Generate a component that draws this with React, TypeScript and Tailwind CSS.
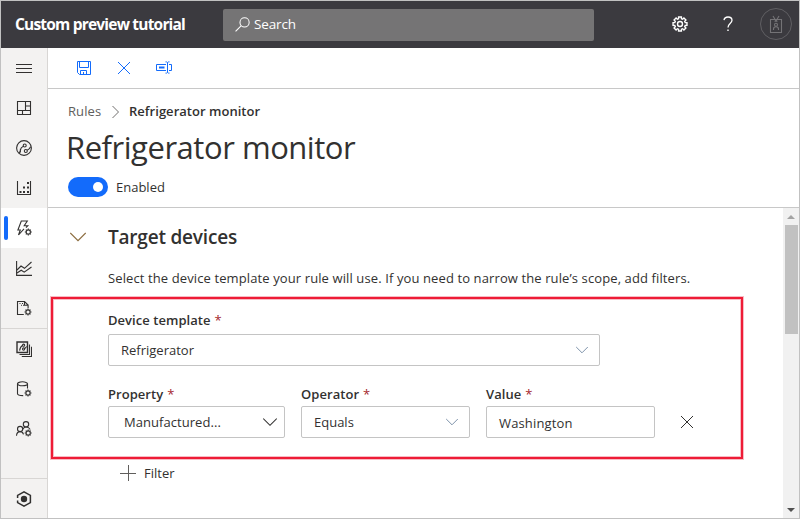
import React from "react";

type IconProps = { children: React.ReactNode; className?: string; size?: number; box?: number; sw?: number };

function Icon({ children, className = "", size = 16, box = 16, sw = 1.1 }: IconProps) {
  return (
    <svg
      width={size}
      height={size}
      viewBox={`0 0 ${box} ${box}`}
      fill="none"
      stroke="currentColor"
      strokeWidth={sw}
      className={`block shrink-0 ${className}`}
    >
      {children}
    </svg>
  );
}

function gearPath(cx: number, cy: number, outer: number, inner: number) {
  const pts: string[] = [];
  for (let i = 0; i < 8; i++) {
    const a = (i * Math.PI) / 4;
    const spots: [number, number][] = [
      [-0.27, inner],
      [-0.2, outer],
      [0.2, outer],
      [0.27, inner],
    ];
    for (const [d, r] of spots) {
      pts.push(`${(cx + r * Math.cos(a + d)).toFixed(2)} ${(cy + r * Math.sin(a + d)).toFixed(2)}`);
    }
  }
  return `M${pts.join("L")}Z`;
}

function SmallGear({ cx, cy }: { cx: number; cy: number }) {
  return (
    <>
      <circle cx={cx} cy={cy} r={2.1} />
      {[0, 45, 90, 135, 180, 225, 270, 315].map((a) => (
        <path key={a} d={`M${cx + 2.3} ${cy}h1.2`} transform={`rotate(${a} ${cx} ${cy})`} />
      ))}
    </>
  );
}

const navTop = [
  <Icon key="menu"><path d="M0 4.5h16M0 8.5h16M0 12.5h16" /></Icon>,
  <Icon key="dash"><path d="M1.5 1.5h13v13h-13zM1.5 10.5h13M9.5 1.5v9M9.5 6h5M6.5 10.5v4" /></Icon>,
  <Icon key="devices">
    <circle cx="8" cy="8" r="7.4" />
    <circle cx="8.7" cy="5.5" r="1.5" />
    <circle cx="9.8" cy="11" r="1.5" />
    <path d="M7.4 6.3C5.6 7 4.6 8.3 4.4 10.2L3.4 13.2M4.4 8.8v3.7M11.2 10.2C12.8 9.7 13.8 8.7 14.6 6.8" />
  </Icon>,
  <Icon key="sets">
    <path d="M1.5 1v13.5h13V1" />
    <path d="M3.5 12h2M7 12h2M11 12h2M7 7.5h2M11 7.5h2M11 3h2" strokeWidth="2" />
  </Icon>,
];

const navMid = [
  <Icon key="analytics">
    <path d="M.6 1v14.4H16" />
    <path d="m1 10 4-4 3.5 2.3L15.5 2M1 13l4.2-2.8 3 2L15.5 7" />
  </Icon>,
  <Icon key="jobs">
    <path d="M7.8 14.5H1.5v-13h7l3.6 3.6v3M8.5 1.5v3.8h3.6" />
    <path d="M3.5 3.5h1M6 3.5h1M5 5.3h1M7 5.3h1" />
    <SmallGear cx={12} cy={12} />
  </Icon>,
];

const navAdmin = [
  <Icon key="templates">
    <path d="M1 1h10.5v10.5H1z" strokeWidth="1.4" />
    <path d="M13.5 3.5v10h-10M15.5 5.8v9.7H5.8" />
    <circle cx="7.6" cy="4.2" r="1.1" /><circle cx="7.6" cy="8" r="1.1" />
    <path d="M6.5 4.6C4.8 5.4 4 7 3.6 9.6M8.7 7.7l2-2.2" />
  </Icon>,
  <Icon key="export">
    <ellipse cx="6.5" cy="2.8" rx="5" ry="2" />
    <path d="M1.5 2.8v9.9c0 1 2 1.9 5.7 1.9M11.5 2.8v4.7" />
    <SmallGear cx={12} cy={12} />
  </Icon>,
  <Icon key="people">
    <circle cx="10" cy="3.3" r="2.7" /><circle cx="4.1" cy="8" r="2.6" />
    <path d="M6.8 8.2C7.7 6.6 8.7 6 10 6c2 0 3.4.9 4.2 2.4M.5 14.7c.2-2.5 1.6-4.1 3.6-4.1 1.8 0 2.9 1 3.4 2.8" />
    <SmallGear cx={12.2} cy={12} />
  </Icon>,
];

function NavItem({ children }: { children: React.ReactNode }) {
  return <div className="flex h-10 shrink-0 items-center justify-center">{children}</div>;
}

function Chevron({ size = 12, className = "" }: { size?: number; className?: string }) {
  return (
    <Icon size={size} box={12} sw={0.9} className={className}>
      <path d="m.2 3 5.8 5.8L11.8 3" />
    </Icon>
  );
}

function Cross() {
  return <Icon size={12} box={12} sw={1}><path d="m0 0 12 12M12 0 0 12" /></Icon>;
}

function Label({ text }: { text: string }) {
  return (
    <div className="flex h-5 items-center gap-1 text-[13px] font-semibold leading-5 text-[#323130]">
      <span className="tracking-[0.05px]">{text}</span>
      <span className="font-normal text-[#a4262c]">*</span>
    </div>
  );
}

function Field({ children, className = "" }: { children: React.ReactNode; className?: string }) {
  return (
    <div className={`flex h-8 items-center justify-between rounded-[2px] border border-[#c4c4c4] bg-white pl-3 ${className}`}>
      {children}
    </div>
  );
}

export default function App() {
  return (
    <div className="flex h-[519px] w-[800px] flex-col overflow-hidden border border-[#c1c1c1] bg-white font-['Open_Sans','Noto_Sans',sans-serif] text-[13.5px] text-[#323130]">
      <header className="flex h-[47px] shrink-0 items-center bg-[#3b3a3f] text-white">
        <div className="w-[222px] whitespace-nowrap pl-[14px] text-[15.5px] font-bold tracking-[-0.8px]">Custom preview tutorial</div>
        <div className="flex h-8 w-[371px] items-center rounded-[2px] bg-[#757475] pl-3">
          <Icon size={15}>
            <circle cx="10.2" cy="5.8" r="4.9" /><path d="M6.7 9.3.6 15.4" />
          </Icon>
          <span className="ml-1 tracking-[-0.15px]">Search</span>
        </div>
        <div className="ml-auto flex items-center pb-0.5 pr-[7px]">
          <Icon size={16} sw={1.4}>
            <path d={gearPath(8, 8, 7.1, 5.4)} /><circle cx="8" cy="8" r="2.5" />
          </Icon>
          <Icon size={16} className="ml-8" sw={1.3}>
            <path d="M4 4.2C4.3 2.2 5.8 1 8 1c2.4 0 4 1.3 4 3.3 0 3.2-4 3.4-4 7.2" />
            <path d="M8 13.4V15" strokeWidth="1.4" />
          </Icon>
          <div className="ml-6 flex size-8 items-center justify-center rounded-full border border-[#605f63] text-[#747376]">
            <Icon size={18} box={18}>
              <path d="M3.5 4.5h11v13h-11zM6 1l3 5 3-5M7.5 6.2h3" />
              <circle cx="9" cy="9.8" r="1.5" /><path d="M6.5 15v-1c0-1.5 1-2.3 2.5-2.3s2.5.8 2.5 2.3v1" />
            </Icon>
          </div>
        </div>
      </header>

      <div className="flex min-h-0 flex-1">
        <nav className="flex w-[47px] shrink-0 flex-col overflow-hidden border-r border-[#d8d6d4] bg-[#f3f2f1]">
          {navTop.map((icon) => <NavItem key={icon.key}>{icon}</NavItem>)}
          <div className="flex h-10 shrink-0 items-center bg-white pl-[3px]">
            <div className="h-6 w-1 rounded-[2px] bg-[#136bfb]" />
            <Icon className="ml-[9px]">
              <path d="M7 8.8 1.5 15l1.8-5H.9L4.3 1h6L7.2 5.7h3.6L9 7.6" />
              <SmallGear cx={11.3} cy={12} />
            </Icon>
          </div>
          {navMid.map((icon) => <NavItem key={icon.key}>{icon}</NavItem>)}
          <div className="flex h-[151px] shrink-0 flex-col border-y border-[#d8d6d4]">
            {navAdmin.map((icon) => <NavItem key={icon.key}>{icon}</NavItem>)}
          </div>
          <NavItem>
            <Icon sw={1.5}>
              <path d="M1.6 7V4.4L8 .9l6.4 3.5v7.2L8 15.1 1.6 11.6v-2" />
              <circle cx="8" cy="8" r="3.2" fill="currentColor" stroke="none" />
            </Icon>
          </NavItem>
        </nav>

        <main className="flex min-w-0 flex-1 flex-col">
          <div className="flex h-[41px] shrink-0 items-center border-b border-[#c8c8c8] pl-[29px] text-[#136bfb]">
            <Icon size={14} box={14} sw={1}>
              <path d="M.5.5h13v13h-11l-2-2zM2.5.5v6h9v-6M3.5 13.5v-4h6v4M6.5 11v2.5" />
            </Icon>
            <div className="ml-[27px] mr-[26px]"><Cross /></div>
            <Icon size={16} sw={1}>
              <path d="M10 4.5H.5v6H10M13 4.5h2.5v6H13M11.5 2.5v10M9.5 1.9h1l1 .8 1-.8h1M9.5 13.1h1l1-.8 1 .8h1" />
              <path d="M3 7.5h5.5" strokeWidth="2" />
            </Icon>
          </div>

          <div className="flex h-[119px] shrink-0 flex-col border-b border-[#c8c8c8] pl-5">
            <div className="mt-[13px] flex h-5 items-center text-[13px] text-[#605e5c]">
              <span className="w-[33px] tracking-[0.1px]">Rules</span>
              <Icon size={12} box={12} sw={0.9} className="ml-2"><path d="m3.5 0 6 6-6 6" /></Icon>
              <span className="ml-2 font-semibold tracking-[0.03px] text-[#323130]">Refrigerator monitor</span>
            </div>
            <h1 className="mt-[3px] -ml-0.5 h-11 whitespace-nowrap text-[31px] font-normal leading-[44px] tracking-[-0.47px]">Refrigerator monitor</h1>
            <div className="mt-2 flex h-5 items-center">
              <div className="flex h-5 w-10 items-center justify-end rounded-full bg-[#136bfb] pr-[5px]">
                <div className="size-[10px] rounded-full bg-white" />
              </div>
              <span className="ml-2 pt-0.5 text-[13px]">Enabled</span>
            </div>
          </div>

          <div className="flex min-h-0 flex-1">
            <div className="flex min-w-0 flex-1 flex-col">
              <div className="mt-[15px] flex h-7 items-center pl-[22px]">
                <Chevron size={16} className="text-[#8a6a3c]" />
                <h2 className="ml-[22px] text-[19px] font-semibold tracking-[-0.2px]">Target devices</h2>
              </div>
              <p className="mt-[17px] h-5 whitespace-nowrap pl-[60px] text-[13px] leading-5 tracking-[0.11px]">
                Select the device template your rule will use. If you need to narrow the rule’s scope, add filters.
              </p>
              <section className="ml-[3px] mt-[9px] h-[162px] w-[692px] border-2 border-[#ee1c36] pl-[55px] pt-[11px] shadow-[0_0_0_1px_#f8bcc4,inset_0_0_0_1px_#f8bcc4]">
                <Label text="Device template" />
                <Field className="mt-1 w-[492px] pr-[11px]">
                  <span className="pt-0.5 text-[13px]">Refrigerator</span>
                  <Chevron className="text-[#6f87a0]" />
                </Field>
                <div className="mt-[18px] flex">
                  <div>
                    <Label text="Property" />
                    <Field className="mt-[2px] w-[177px] pl-[15px] pr-[7px]">
                      <span className="pt-0.5 text-[13px] tracking-[0.05px]">Manufactured...</span>
                      <Chevron size={14} className="text-[#323130]" />
                    </Field>
                  </div>
                  <div className="ml-4">
                    <Label text="Operator" />
                    <Field className="mt-[2px] w-[169px] pr-[11px]">
                      <span className="pt-0.5 text-[13px]">Equals</span>
                      <Chevron className="text-[#6f87a0]" />
                    </Field>
                  </div>
                  <div className="ml-4">
                    <Label text="Value" />
                    <Field className="mt-[2px] w-[169px]">
                      <span className="pt-[3px] text-[13px] tracking-[0.15px]">Washington</span>
                    </Field>
                  </div>
                  <div className="ml-[26px] mt-8"><Cross /></div>
                </div>
              </section>
              <div className="mt-1 flex h-5 items-center pl-[72px]">
                <Icon sw={1} className="text-[#605e5c]"><path d="M0 8.5h16M8.5 0v16" /></Icon>
                <span className="ml-2 pt-0.5 text-[13px]">Filter</span>
              </div>
            </div>
            <div className="flex w-4 shrink-0 flex-col items-center bg-[#f1f1f1]">
              <div className="flex h-[17px] items-center"><svg width="8" height="4"><path d="m0 4 4-4 4 4z" fill="#a3a3a3" /></svg></div>
              <div className="ml-px h-[109px] w-[13px] bg-[#c1c1c1]" />
              <div className="mt-auto flex h-[17px] items-center"><svg width="8" height="4"><path d="m0 0 4 4 4-4z" fill="#505050" /></svg></div>
            </div>
          </div>
        </main>
      </div>
    </div>
  );
}
